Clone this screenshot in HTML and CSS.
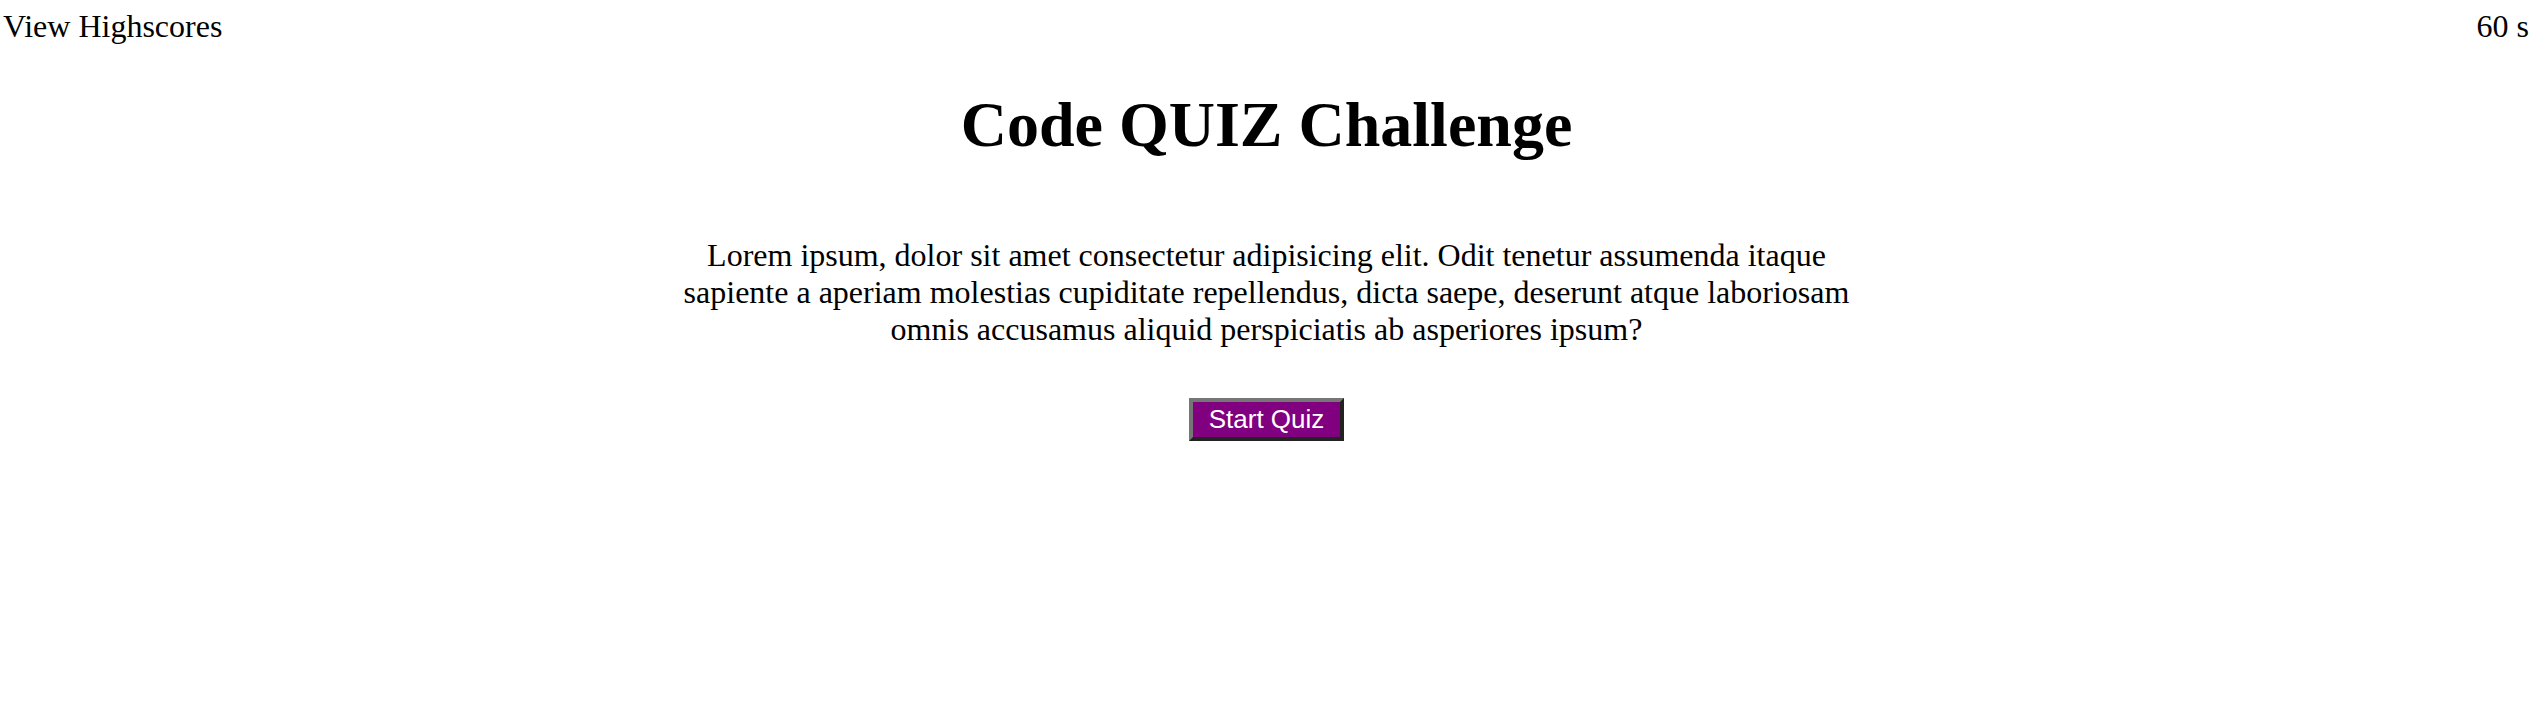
FILE: index.html
```html
<!DOCTYPE html>
<html lang="en">
<head>
<meta charset="utf-8">
<title>Code Quiz</title>
<link rel="stylesheet" href="styles.css">
</head>
<body>
  <header class="topbar">
    <a class="highscores">View Highscores</a>
    <span class="timer">60 s</span>
  </header>
  <main class="main">
    <h1 class="title">Code QUIZ Challenge</h1>
    <p class="intro">Lorem ipsum, dolor sit amet consectetur adipisicing elit. Odit tenetur assumenda itaque sapiente a aperiam molestias cupiditate repellendus, dicta saepe, deserunt atque laboriosam omnis accusamus aliquid perspiciatis ab asperiores ipsum?</p>
    <div class="actions">
      <button class="start-btn" type="button">Start Quiz</button>
    </div>
  </main>
</body>
</html>
```

FILE: styles.css
```css
html, body {
  background: #ffffff;
}

body {
  margin: 0;
  padding: 8px 0 0 0;
  font-family: "Liberation Serif", "Times New Roman", serif;
  font-size: 32px;
  color: #000000;
}

.topbar {
  display: flex;
  justify-content: space-between;
  align-items: baseline;
  padding: 0 15px 0 3px;
}

.highscores {
  color: #000000;
  text-decoration: none;
}

.main {
  display: flex;
  flex-direction: column;
  align-items: center;
  padding-right: 11px;
}

.title {
  font-size: 64px;
  font-weight: bold;
  text-align: center;
  margin: 43px 0 0;
}

.intro {
  max-width: 1200px;
  margin: 75px 0 0;
  text-align: center;
}

.actions {
  margin-top: 50px;
  text-align: center;
}

.start-btn {
  font-family: "Liberation Sans", Arial, sans-serif;
  font-size: 26px;
  line-height: 29px;
  color: #ffffff;
  background: #800080;
  border-width: 4px;
  border-style: solid;
  border-color: #767676 #222222 #222222 #767676;
  padding: 3px 16px;
  margin: 0;
}
```
